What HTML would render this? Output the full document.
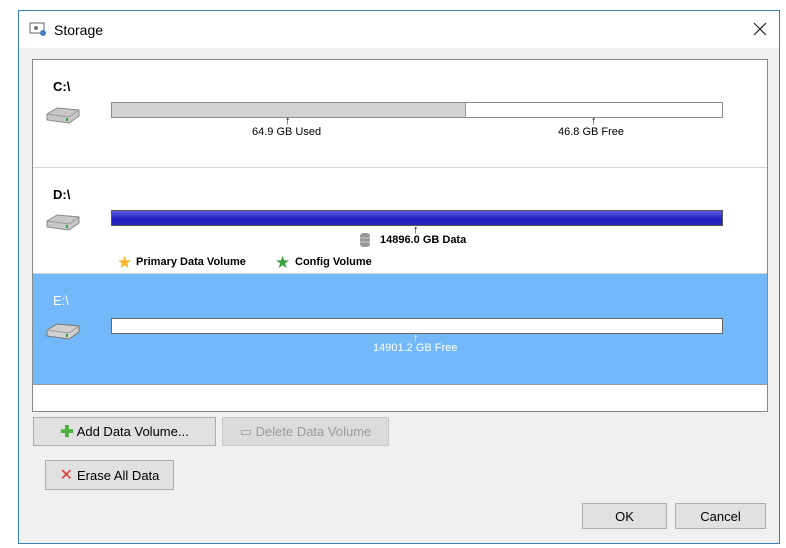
<!DOCTYPE html>
<html><head><style>
*{margin:0;padding:0;box-sizing:border-box}
body{width:786px;height:548px;background:#fff;position:relative;overflow:hidden;font-family:"Liberation Sans",sans-serif;font-size:12px;color:#000}
.a{position:absolute}
.win{left:18px;top:10px;width:762px;height:534px;border:1px solid #3c7fb1;background:#f0f0f0}
.title{left:0;top:0;width:760px;height:37px;background:#fff}
.list{left:13px;top:48px;width:736px;height:353px;border:1px solid #828790;background:#fff}
.row{left:0;width:734px;border-bottom:1px solid #d6d6d6}
.bar{left:78px;width:612px;height:16px;border:1px solid #8a8a8a;background:#fff}
.lbl{font-size:11px;white-space:nowrap}
.drv{font-weight:bold;font-size:13px}
.btn{border:1px solid #adadad;background:#e1e1e1;font-size:13px;display:flex;align-items:center;justify-content:center}
</style></head><body>
<div class="a win">
 <div class="a title">
  <svg class="a" style="left:10px;top:11px" width="18" height="14"><rect x="1" y="1" width="14" height="10" fill="#fff" stroke="#666"/><circle cx="7" cy="6" r="2" fill="#777"/><circle cx="14" cy="11" r="3" fill="#4a7fc0"/></svg>
  <div class="a" style="left:35px;top:11px;font-size:14px">Storage</div>
  <svg class="a" style="left:734px;top:11px" width="14" height="14"><path d="M1 1L13 13M13 1L1 13" stroke="#222" stroke-width="1.2"/></svg>
 </div>
 <div class="a list">
  <div class="a row" style="top:0;height:108px">
   <div class="a drv" style="left:20px;top:19px">C:\</div>
   <svg class="a" style="left:10px;top:46px" width="40" height="20"><path d="M4 8 L14 2 L36 4 L36 10 L26 17 L4 14Z" fill="#c8c8c8" stroke="#888"/><path d="M4 8 L26 11 L36 4" fill="none" stroke="#999"/><rect x="23" y="12" width="2" height="3" fill="#3a3"/></svg>
   <div class="a bar" style="top:42px"><div style="width:354px;height:14px;background:#d2d2d2;border-right:1px solid #999"></div></div>
   <div class="a lbl" style="left:252px;top:55px">↑</div>
   <div class="a lbl" style="left:219px;top:66px">64.9 GB Used</div>
   <div class="a lbl" style="left:558px;top:55px">↑</div>
   <div class="a lbl" style="left:525px;top:66px">46.8 GB Free</div>
  </div>
  <div class="a row" style="top:108px;height:106px">
   <div class="a drv" style="left:20px;top:19px">D:\</div>
   <svg class="a" style="left:10px;top:45px" width="40" height="20"><path d="M4 8 L14 2 L36 4 L36 10 L26 17 L4 14Z" fill="#c8c8c8" stroke="#888"/><path d="M4 8 L26 11 L36 4" fill="none" stroke="#999"/><rect x="23" y="12" width="2" height="3" fill="#3a3"/></svg>
   <div class="a bar" style="top:42px;background:linear-gradient(#5a5ae0,#1c1cc0 60%,#2a2ab8);border-color:#555"></div>
   <div class="a lbl" style="left:380px;top:56px">↑</div>
   <svg class="a" style="left:326px;top:64px" width="12" height="16"><rect x="1" y="1" width="10" height="14" rx="3" fill="#999"/><path d="M1 6h10M1 10h10" stroke="#ccc"/></svg>
   <div class="a lbl" style="left:347px;top:66px;font-weight:bold">14896.0 GB Data</div>
   <div class="a lbl" style="left:84px;top:85px;color:#f3b42a;font-size:17px">★</div>
   <div class="a lbl" style="left:103px;top:88px;font-weight:bold">Primary Data Volume</div>
   <div class="a lbl" style="left:242px;top:85px;color:#3aa040;font-size:17px">★</div>
   <div class="a lbl" style="left:262px;top:88px;font-weight:bold">Config Volume</div>
  </div>
  <div class="a row" style="top:214px;height:111px;background:#73b8f8;border-bottom:1px solid #999">
   <div class="a drv" style="left:20px;top:19px;color:#fff;font-weight:normal">E:\</div>
   <svg class="a" style="left:10px;top:48px" width="40" height="20"><path d="M4 8 L14 2 L36 4 L36 10 L26 17 L4 14Z" fill="#d0d0d0" stroke="#777"/><path d="M4 8 L26 11 L36 4" fill="none" stroke="#999"/><rect x="23" y="12" width="2" height="3" fill="#3a3"/></svg>
   <div class="a bar" style="top:44px;border-color:#666"></div>
   <div class="a lbl" style="left:380px;top:58px;color:#fff">↑</div>
   <div class="a lbl" style="left:340px;top:68px;color:#fff">14901.2 GB Free</div>
  </div>
 </div>
 <div class="a btn" style="left:14px;top:406px;width:183px;height:29px"><span style="color:#4bb040;font-weight:bold;font-size:16px;margin-right:3px">✚</span>Add Data Volume...</div>
 <div class="a btn" style="left:203px;top:406px;width:167px;height:29px;color:#9a9a9a;border-color:#c8c8c8;background:#dcdcdc">▭ Delete Data Volume</div>
 <div class="a btn" style="left:26px;top:449px;width:129px;height:30px"><span style="color:#e03a30;font-size:16px;margin-right:4px">✕</span>Erase All Data</div>
 <div class="a btn" style="left:563px;top:492px;width:85px;height:26px">OK</div>
 <div class="a btn" style="left:656px;top:492px;width:91px;height:26px">Cancel</div>
</div>
</body></html>
